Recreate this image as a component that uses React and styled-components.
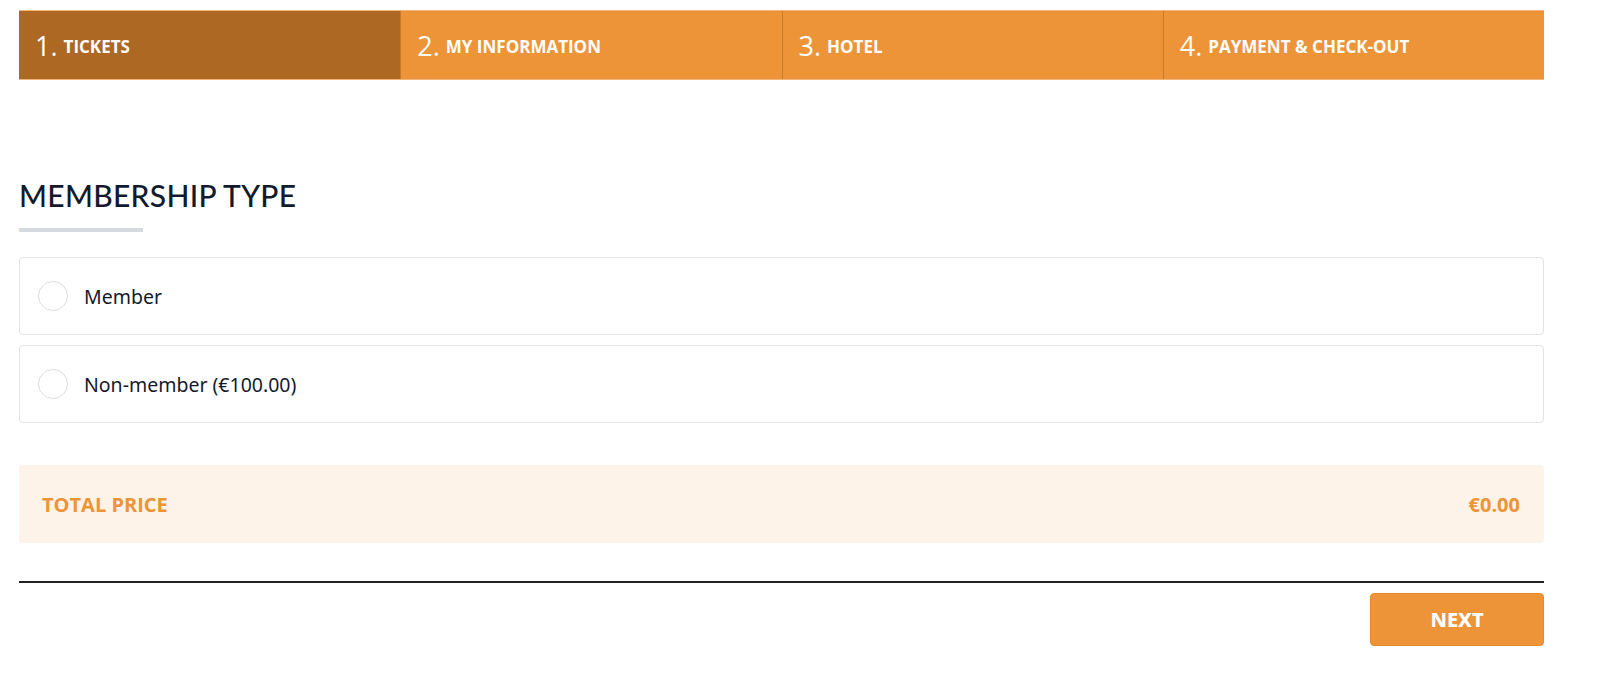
import React, { useState } from "react";
import styled, { createGlobalStyle } from "styled-components";

const GlobalStyle = createGlobalStyle`
  * { box-sizing: border-box; }
  html, body { overflow: hidden; }
  body {
    margin: 0;
    background: #fff;
    font-family: "Open Sans", "Liberation Sans", sans-serif;
  }
`;

const steps = ["Tickets", "My information", "Hotel", "Payment & check-out"];
const options = [
  { id: "member", label: "Member" },
  { id: "non-member", label: "Non-member (€100.00)" },
];

export default function App() {
  const [active] = useState(0);
  const [choice, setChoice] = useState(null);

  return (
    <>
      <GlobalStyle />
      <Page>
        <Steps>
          {steps.map((s, i) => (
            <Step key={s} $active={i === active}>
              <Num>{i + 1}.</Num>
              <StepLabel>{s}</StepLabel>
            </Step>
          ))}
        </Steps>

        <Heading>Membership type</Heading>
        <HeadingBar />

        <Options>
          {options.map((o) => (
            <Option key={o.id} onClick={() => setChoice(o.id)}>
              <Radio $checked={choice === o.id} />
              <OptionLabel>{o.label}</OptionLabel>
            </Option>
          ))}
        </Options>

        <Total>
          <span>Total price</span>
          <span>€0.00</span>
        </Total>

        <Footer>
          <NextButton>Next</NextButton>
        </Footer>
      </Page>
    </>
  );
}

const Page = styled.div`
  width: 1525px;
  margin-left: 19px;
  padding-top: 10px;
`;

const Steps = styled.div`
  display: grid;
  grid-template-columns: repeat(4, 1fr);
  height: 70px;
  background: #ee9438;
  border-top: 1px solid #f3b47a;
  border-bottom: 1px solid #f3b47a;
`;

const Step = styled.div`
  display: flex;
  align-items: center;
  padding-left: 16px;
  color: #fff;
  background: ${(p) => (p.$active ? "#ad6823" : "#ee9438")};
  & + & {
    border-left: 1px solid #c97a2a;
  }
`;

const Num = styled.span`
  font-size: 27px;
  font-weight: 400;
  margin-right: 6px;
  line-height: 1;
`;

const StepLabel = styled.span`
  font-size: 17px;
  font-weight: 700;
  text-transform: uppercase;
  padding-top: 3px;
`;

const Heading = styled.h2`
  margin: 97px 0 0;
  font-family: Lato, "Noto Sans", sans-serif;
  font-weight: 500;
  font-size: 30px;
  letter-spacing: 0.3px;
  line-height: 36px;
  color: #121a2e;
  text-transform: uppercase;
`;

const HeadingBar = styled.div`
  width: 124px;
  height: 4px;
  margin-top: 15px;
  background: #d4dadf;
`;

const Options = styled.div`
  display: flex;
  flex-direction: column;
  gap: 10px;
  margin-top: 25px;
`;

const Option = styled.label`
  display: flex;
  align-items: center;
  height: 78px;
  padding-left: 18px;
  border: 1px solid #e4e4e4;
  border-radius: 4px;
  cursor: pointer;
`;

const Radio = styled.span`
  width: 30px;
  height: 30px;
  border-radius: 50%;
  border: 1px solid #dcdcdc;
  background: ${(p) => (p.$checked ? "radial-gradient(circle, #ee9438 0 7px, #fff 8px)" : "#fff")};
  flex-shrink: 0;
`;

const OptionLabel = styled.span`
  margin-left: 16px;
  font-family: "Noto Sans", "Open Sans", sans-serif;
  font-size: 19.5px;
  color: #141a2a;
`;

const Total = styled.div`
  display: flex;
  justify-content: space-between;
  align-items: center;
  height: 78px;
  margin-top: 42px;
  padding: 0 24px 0 23px;
  background: #fdf3e8;
  border-radius: 4px;
  color: #ee9438;
  font-weight: 700;
  font-size: 20px;
  text-transform: uppercase;
`;

const Footer = styled.div`
  display: flex;
  justify-content: flex-end;
  margin-top: 38px;
  padding-top: 10px;
  border-top: 2px solid #222;
`;

const NextButton = styled.button`
  width: 174px;
  height: 53px;
  border: 1px solid #e8892a;
  border-radius: 4px;
  background: #ee9438;
  color: #fff;
  font-family: "Noto Sans", "Open Sans", sans-serif;
  font-weight: 800;
  font-size: 20px;
  text-transform: uppercase;
  cursor: pointer;
`;
